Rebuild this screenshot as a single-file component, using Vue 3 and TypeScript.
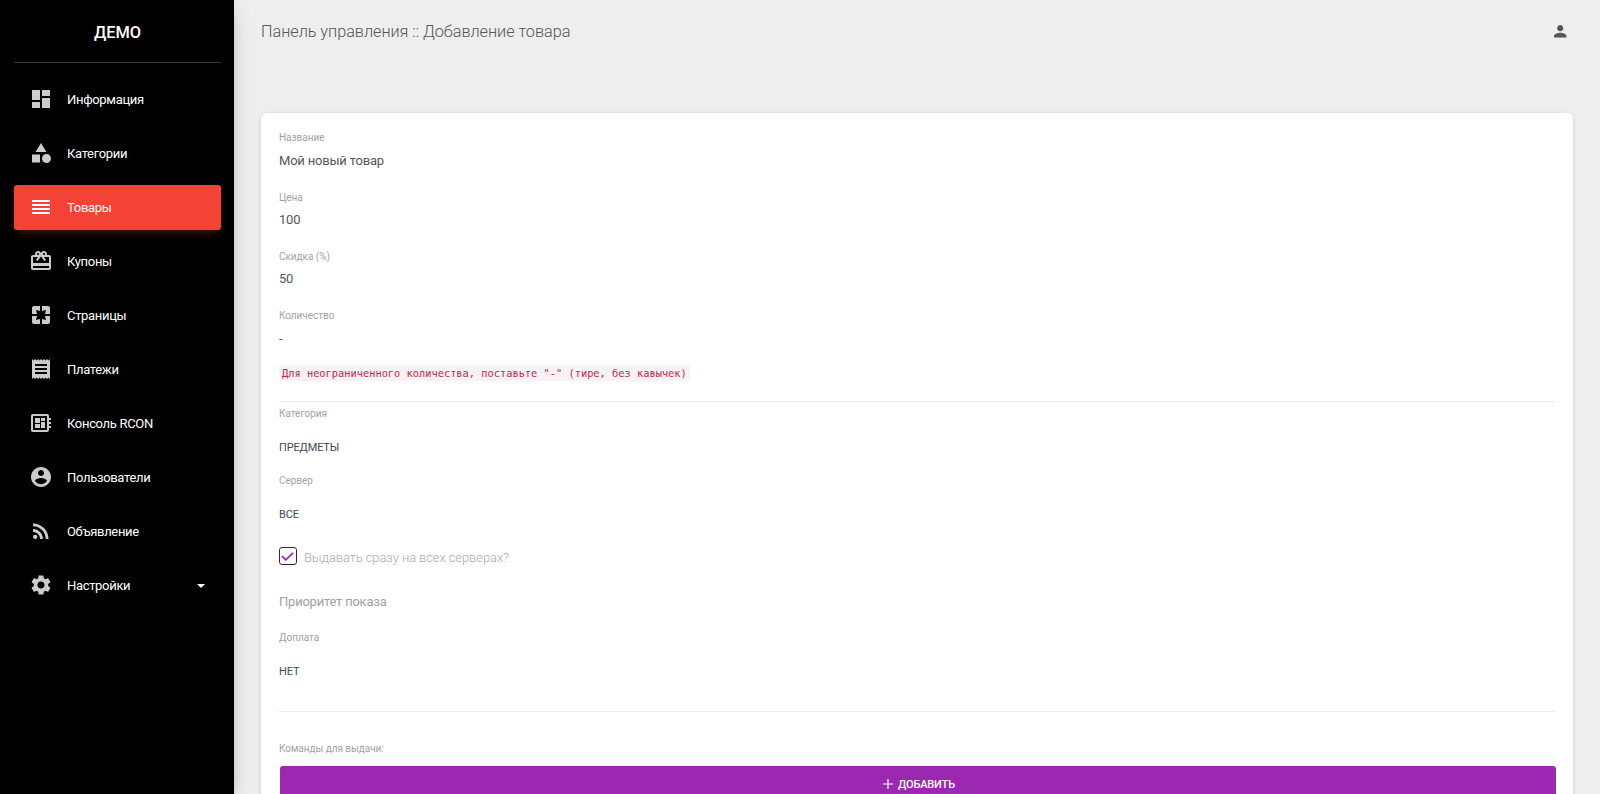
<script setup lang="ts">
import { ref } from 'vue'

interface NavItem {
  label: string
  icon: string
  active?: boolean
  expandable?: boolean
}

const nav: NavItem[] = [
  { label: 'Информация', icon: 'M3 13h8V3H3v10zm0 8h8v-6H3v6zm10 0h8V11h-8v10zm0-18v6h8V3h-8z' },
  { label: 'Категории', icon: 'M12 2l-5.5 9h11zM13 17.5a4.5 4.5 0 1 0 9 0a4.5 4.5 0 1 0-9 0zM3 13.5h8v8H3z' },
  { label: 'Товары', active: true, icon: 'M3 15h18v-2H3v2zm0 4h18v-2H3v2zm0-8h18V9H3v2zm0-6v2h18V5H3z' },
  { label: 'Купоны', icon: 'M20 6h-2.18c.11-.31.18-.65.18-1 0-1.66-1.34-3-3-3-1.05 0-1.96.54-2.5 1.35l-.5.67-.5-.68C10.96 2.54 10.05 2 9 2 7.34 2 6 3.34 6 5c0 .35.07.69.18 1H4c-1.11 0-1.99.89-1.99 2L2 19c0 1.11.89 2 2 2h16c1.11 0 2-.89 2-2V8c0-1.11-.89-2-2-2zm-5-2c.55 0 1 .45 1 1s-.45 1-1 1-1-.45-1-1 .45-1 1-1zM9 4c.55 0 1 .45 1 1s-.45 1-1 1-1-.45-1-1 .45-1 1-1zm11 15H4v-2h16v2zm0-5H4V8h5.08L7 10.83 8.62 12 11 8.76l1-1.36 1 1.36L15.38 12 17 10.83 14.92 8H20v6z' },
  { label: 'Страницы', icon: 'M3 5v6h5L7 7l4 1V3H5c-1.1 0-2 .9-2 2zm5 8H3v6c0 1.1.9 2 2 2h6v-5l-4 1 1-4zm9 4l-4-1v5h6c1.1 0 2-.9 2-2v-6h-5l1 4zm2-14h-6v5l4-1-1 4h5V5c0-1.1-.9-2-2-2z' },
  { label: 'Платежи', icon: 'M18 17H6v-2h12v2zm0-4H6v-2h12v2zm0-4H6V7h12v2zM3 22l1.5-1.5L6 22l1.5-1.5L9 22l1.5-1.5L12 22l1.5-1.5L15 22l1.5-1.5L18 22l1.5-1.5L21 22V2l-1.5 1.5L18 2l-1.5 1.5L15 2l-1.5 1.5L12 2l-1.5 1.5L9 2 7.5 3.5 6 2 4.5 3.5 3 2v20z' },
  { label: 'Консоль RCON', icon: 'M22 9V7h-2V5c0-1.1-.9-2-2-2H4c-1.1 0-2 .9-2 2v14c0 1.1.9 2 2 2h14c1.1 0 2-.9 2-2v-2h2v-2h-2v-2h2v-2h-2V9h2zm-4 10H4V5h14v14zM6 13h5v4H6zm6-6h4v3h-4zM6 7h5v5H6zm6 4h4v6h-4z' },
  { label: 'Пользователи', icon: 'M12 2C6.48 2 2 6.48 2 12s4.48 10 10 10 10-4.48 10-10S17.52 2 12 2zm0 3c1.66 0 3 1.34 3 3s-1.34 3-3 3-3-1.34-3-3 1.34-3 3-3zm0 14.2c-2.5 0-4.71-1.28-6-3.22.03-1.99 4-3.08 6-3.08 1.99 0 5.97 1.09 6 3.08-1.29 1.94-3.5 3.22-6 3.22z' },
  { label: 'Объявление', icon: 'M4 17.82a2.18 2.18 0 1 0 4.36 0a2.18 2.18 0 1 0-4.36 0zM4 4.44v2.83c7.03 0 12.73 5.7 12.73 12.73h2.83c0-8.59-6.97-15.56-15.56-15.56zm0 5.66v2.83c3.9 0 7.07 3.17 7.07 7.07h2.83c0-5.47-4.43-9.9-9.9-9.9z' },
  { label: 'Настройки', expandable: true, icon: 'M19.14 12.94c.04-.3.06-.61.06-.94 0-.32-.02-.64-.07-.94l2.03-1.58c.18-.14.23-.41.12-.61l-1.92-3.32c-.12-.22-.37-.29-.59-.22l-2.39.96c-.5-.38-1.03-.7-1.62-.94l-.36-2.54c-.04-.24-.24-.41-.48-.41h-3.84c-.24 0-.43.17-.47.41l-.36 2.54c-.59.24-1.13.57-1.62.94l-2.39-.96c-.22-.08-.47 0-.59.22L2.74 8.87c-.12.21-.08.47.12.61l2.03 1.58c-.05.3-.09.63-.09.94s.02.64.07.94l-2.03 1.58c-.18.14-.23.41-.12.61l1.92 3.32c.12.22.37.29.59.22l2.39-.96c.5.38 1.03.7 1.62.94l.36 2.54c.05.24.24.41.48.41h3.84c.24 0 .44-.17.47-.41l.36-2.54c.59-.24 1.13-.56 1.62-.94l2.39.96c.22.08.47 0 .59-.22l1.92-3.32c.12-.22.07-.47-.12-.61l-2.01-1.58zM12 15.6c-1.98 0-3.6-1.62-3.6-3.6s1.62-3.6 3.6-3.6 3.6 1.62 3.6 3.6-1.62 3.6-3.6 3.6z' },
]

const fields = ref([
  { label: 'Название', value: 'Мой новый товар' },
  { label: 'Цена', value: '100' },
  { label: 'Скидка (%)', value: '50' },
  { label: 'Количество', value: '-' },
])
</script>

<template>
  <div class="layout">
    <aside class="sidebar">
      <div class="brand">ДЕМО</div>
      <nav class="nav">
        <a v-for="item in nav" :key="item.label" class="nav-item" :class="{ active: item.active }">
          <svg class="nav-icon" viewBox="0 0 24 24"><path :d="item.icon" /></svg>
          <span class="nav-label">{{ item.label }}</span>
          <i v-if="item.expandable" class="caret"></i>
        </a>
      </nav>
    </aside>

    <main class="main">
      <header class="topbar">
        <h1 class="title">Панель управления :: Добавление товара</h1>
        <svg class="person" viewBox="0 0 24 24">
          <path d="M12 12c2.21 0 4-1.79 4-4s-1.79-4-4-4-4 1.79-4 4 1.79 4 4 4zm0 2c-2.67 0-8 1.34-8 4v2h16v-2c0-2.66-5.33-4-8-4z" />
        </svg>
      </header>

      <form class="card" @submit.prevent>
        <label v-for="f in fields" :key="f.label" class="field">
          <span class="label">{{ f.label }}</span>
          <input v-model="f.value" class="input" type="text" />
        </label>
        <div class="hint"><code>Для неограниченного количества, поставьте "-" (тире, без кавычек)</code></div>
        <hr class="rule" />
        <div class="picker category">
          <span class="label">Категория</span>
          <span class="choice">ПРЕДМЕТЫ</span>
        </div>
        <div class="picker server">
          <span class="label">Сервер</span>
          <span class="choice">ВСЕ</span>
        </div>
        <div class="check">
          <span class="box">
            <svg viewBox="0 0 16 16"><path d="M2 8.1l3.9 3.7L13 4.9" /></svg>
          </span>
          <span class="check-label">Выдавать сразу на всех серверах?</span>
        </div>
        <div class="priority">Приоритет показа</div>
        <div class="picker">
          <span class="label">Доплата</span>
          <span class="choice">НЕТ</span>
        </div>
        <hr class="rule second" />
        <span class="label commands">Команды для выдачи:</span>
        <button class="add" type="button">
          <svg class="plus" viewBox="0 0 10 10"><path d="M5 0v10M0 5h10" /></svg>
          <span>ДОБАВИТЬ</span>
        </button>
      </form>
    </main>
  </div>
</template>

<style>
body {
  background: #eee;
  overflow: hidden;
}
</style>

<style scoped>
.layout {
  display: flex;
  height: 794px;
  overflow: hidden;
  background: #eee;
  font-family: Roboto, "Liberation Sans", sans-serif;
  color: #555;
}
.sidebar {
  flex: none;
  box-sizing: border-box;
  width: 234px;
  padding: 0 13px 0 14px;
  background: #000;
  color: #fff;
  box-shadow: 0 9px 20px -11px rgba(0, 0, 0, 0.4), 0 4px 20px 0 rgba(0, 0, 0, 0.08), 0 7px 9px -4px rgba(0, 0, 0, 0.14);
}
.brand {
  height: 62px;
  line-height: 65px;
  text-align: center;
  font-size: 16.4px;
  font-weight: 500;
  letter-spacing: -0.1px;
  border-bottom: 1px solid #383838;
}
.nav {
  display: flex;
  flex-direction: column;
  gap: 9px;
  padding-top: 14px;
}
.nav-item {
  display: flex;
  align-items: center;
  box-sizing: border-box;
  height: 45px;
  padding: 0 16px 0 15px;
  border-radius: 3px;
  font-size: 13px;
  letter-spacing: -0.32px;
}
.nav-icon {
  width: 24px;
  height: 24px;
  margin: -1px 14px 0 0;
  fill: #ccc;
}
.nav-label {
  flex: 1;
}
.active {
  background: #f44336;
  box-shadow: 0 4px 10px -4px rgba(244, 67, 54, 0.5);
}
.active .nav-icon {
  fill: #fff;
}
.caret {
  border: 4px solid transparent;
  border-top: 4px solid #fff;
  border-bottom: 0;
}
.main {
  flex: 1;
  padding: 0 27px;
}
.topbar {
  display: flex;
  align-items: center;
  justify-content: space-between;
  height: 62px;
  margin-bottom: 51px;
}
.title {
  margin: 0;
  font-size: 16.25px;
  font-weight: 300;
  letter-spacing: -0.03px;
}
.person {
  width: 18.5px;
  height: 18.5px;
  margin-right: 3.5px;
  fill: #555;
}
.card {
  box-sizing: border-box;
  width: 1312px;
  height: 760px;
  padding: 17.2px 18px 17px;
  border-radius: 6px;
  background: #fff;
  box-shadow: 0 1px 4px 0 rgba(0, 0, 0, 0.14);
}
.field {
  display: block;
  height: 59.35px;
}
.label {
  display: block;
  line-height: 16px;
  font-size: 10px;
  letter-spacing: -0.03px;
  color: #a2a2a2;
}
.input {
  display: block;
  width: 100%;
  height: 20px;
  margin-top: 4.4px;
  padding: 0;
  border: 0;
  outline: 0;
  background: none;
  font: 400 13px/20px Roboto, "Liberation Sans", sans-serif;
  letter-spacing: -0.2px;
  color: #555;
}
.hint {
  display: flex;
  height: 16px;
  margin-top: -2.6px;
}
.hint code {
  padding: 0 3px;
  border-radius: 3px;
  background: #f9f2f4;
  color: #c7254e;
  font: 10.35px/16px "DejaVu Sans Mono", monospace;
}
.rule {
  height: 1px;
  margin: 20px 0 4px;
  border: 0;
  background: #ececec;
}
.choice {
  display: block;
  margin-top: 16px;
  line-height: 20px;
  font-size: 11px;
  letter-spacing: -0.15px;
  color: #3c4858;
}
.category {
  margin-bottom: 15px;
}
.server {
  margin-bottom: 22px;
}
.check {
  display: flex;
  height: 20px;
}
.box {
  box-sizing: border-box;
  width: 18px;
  height: 18px;
  border: 1px solid #4a1259;
  border-radius: 3px;
}
.box svg {
  display: block;
  width: 16px;
  height: 16px;
  fill: none;
  stroke: #9c27b0;
  stroke-width: 1.8;
}
.check-label {
  margin-left: 7px;
  line-height: 21px;
  font-size: 13px;
  font-weight: 300;
  letter-spacing: -0.1px;
  color: #aaa;
}
.priority {
  margin: 25px 0 18px;
  line-height: 20px;
  font-size: 13px;
  letter-spacing: -0.22px;
  color: #a2a2a2;
}
.second {
  margin: 29px 0 29px;
}
.commands {
  margin-bottom: 9px;
}
.add {
  display: flex;
  align-items: center;
  justify-content: center;
  gap: 5px;
  box-sizing: border-box;
  width: 1276px;
  height: 37px;
  margin: 0 0 0 1px;
  padding: 0 0 0 2px;
  border: 0;
  border-radius: 3px;
  background: #9c27b0;
  color: #fff;
  font: 500 11px Roboto, "Liberation Sans", sans-serif;
  letter-spacing: -0.15px;
}
.plus {
  width: 10px;
  height: 10px;
  fill: none;
  stroke: #fff;
  stroke-width: 1.2;
}
</style>
